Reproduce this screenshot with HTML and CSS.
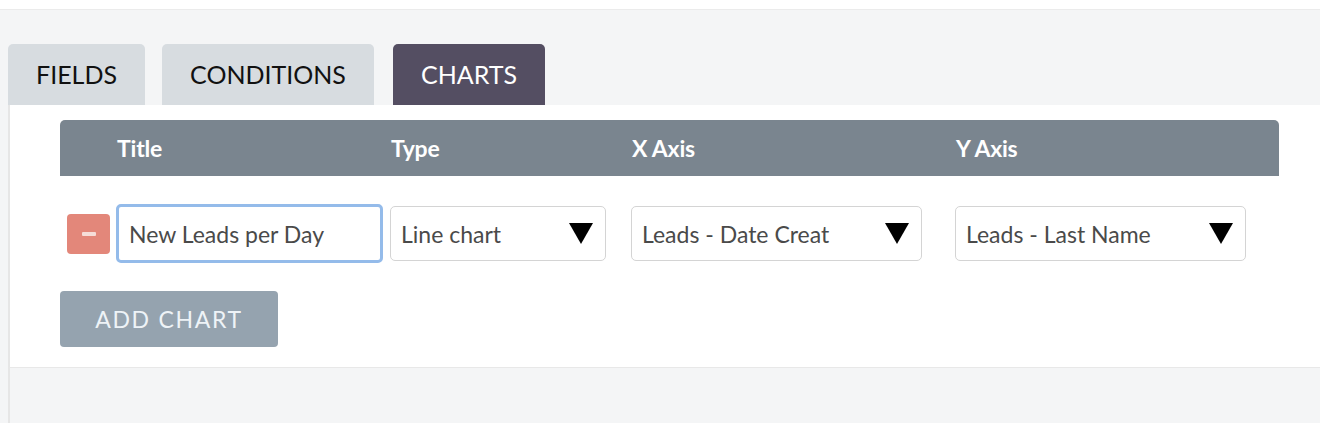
FILE: index.html
```html
<!DOCTYPE html>
<html>
<head>
<meta charset="utf-8">
<link rel="stylesheet" href="styles.css">
</head>
<body>
<div class="topbar"></div>
<div class="page">
  <div class="tabs">
    <div class="tab tab-fields">FIELDS</div>
    <div class="tab tab-conditions">CONDITIONS</div>
    <div class="tab tab-charts active">CHARTS</div>
  </div>
  <div class="content">
    <div class="panel">
      <div class="grid head">
        <div></div>
        <div class="hcell">Title</div>
        <div class="hcell">Type</div>
        <div class="hcell">X Axis</div>
        <div class="hcell">Y Axis</div>
      </div>
      <div class="grid row">
        <div class="cell"><button class="minus"><span class="dash"></span></button></div>
        <div class="cell"><div class="input focused">New Leads per Day</div></div>
        <div class="cell"><div class="select w-type"><span>Line chart</span><span class="tri"></span></div></div>
        <div class="cell"><div class="select w-axis"><span>Leads - Date Creat</span><span class="tri"></span></div></div>
        <div class="cell"><div class="select w-axis"><span>Leads - Last Name</span><span class="tri"></span></div></div>
      </div>
      <button class="add">ADD CHART</button>
    </div>
  </div>
</div>
</body>
</html>
```
FILE: styles.css
```css
html, body {
  margin: 0;
  padding: 0;
  height: 100%;
}
body {
  font-family: Lato, "Open Sans", sans-serif;
  background: #f5f5f5;
  overflow: hidden;
}
.topbar {
  height: 9px;
  background: #ffffff;
  border-bottom: 1px solid #ebebeb;
}
.page {
  background: #f4f5f6;
  padding: 34px 0 0 8px;
  height: 380px;
}
.tabs {
  display: flex;
  align-items: flex-end;
}
.tab {
  height: 61px;
  box-sizing: border-box;
  display: flex;
  align-items: center;
  justify-content: center;
  font-size: 25px;
  color: #111;
  background: #d7dce0;
  border-radius: 5px 5px 0 0;
  padding-bottom: 1px;
}
.tab-fields { width: 137px; }
.tab-conditions { width: 212px; margin-left: 17px; }
.tab-charts { width: 152px; margin-left: 19px; }
.tab.active {
  background: #544e62;
  color: #ffffff;
}
.content {
  border-left: 2px solid #e6e6e6;
  height: 318px;
}
.panel {
  background: #ffffff;
  height: 263px;
  box-sizing: border-box;
  padding: 15px 0 0 50px;
  border-bottom: 1px solid #e8e8e8;
}
.grid {
  display: grid;
  grid-template-columns: 56px 274px 241px 324px 1fr;
  width: 1219px;
}
.head {
  height: 56px;
  background: #7a858f;
  border-radius: 5px 5px 0 0;
  align-items: center;
}
.hcell {
  color: #ffffff;
  font-weight: 700;
  font-size: 23px;
  letter-spacing: -0.2px;
  padding-left: 1px;
}
.row {
  margin-top: 28px;
  height: 59px;
  align-items: center;
}
.cell {
  display: flex;
  align-items: center;
}
.minus {
  margin-left: 7px;
  width: 43px;
  height: 40px;
  border: none;
  border-radius: 4px;
  background: #e3877a;
  display: flex;
  align-items: center;
  justify-content: center;
  padding: 0;
}
.dash {
  width: 14px;
  height: 4px;
  background: #f6ddd8;
  border-radius: 1px;
}
.input {
  width: 267px;
  height: 59px;
  box-sizing: border-box;
  border: 3px solid #94bbea;
  border-radius: 5px;
  padding-left: 10px;
  display: flex;
  align-items: center;
  font-size: 23px;
  color: #4a4a4a;
}
.select {
  height: 55px;
  box-sizing: border-box;
  border: 1px solid #d4d4d4;
  border-radius: 5px;
  padding: 0 12px 0 10px;
  display: flex;
  align-items: center;
  justify-content: space-between;
  font-size: 23px;
  color: #4a4a4a;
}
.w-type { width: 216px; }
.w-axis { width: 291px; }
.tri {
  width: 0;
  height: 0;
  border-left: 12px solid transparent;
  border-right: 12px solid transparent;
  border-top: 21px solid #000;
}
.add {
  margin-top: 28px;
  width: 218px;
  height: 56px;
  border: none;
  border-radius: 4px;
  background: #95a3af;
  color: #eef3f7;
  font-family: Lato, "Open Sans", sans-serif;
  font-size: 23px;
  letter-spacing: 1.7px;
  padding: 0;
}
```
